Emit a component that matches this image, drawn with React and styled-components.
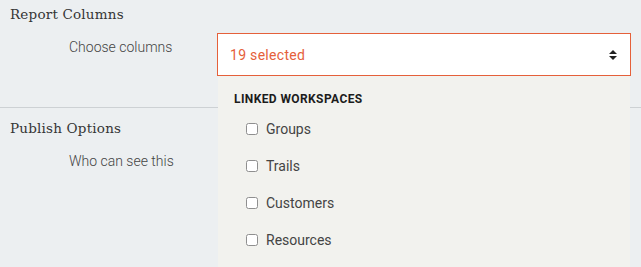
import React from "react";
import styled, { createGlobalStyle } from "styled-components";

const Global = createGlobalStyle`
  html, body { margin: 0; padding: 0; }
  body {
    background: #eceff1;
    font-family: Roboto, "Liberation Sans", sans-serif;
    overflow: hidden;
    height: 267px;
  }
`;

const Page = styled.div`
  width: 641px;
`;

const Section = styled.section`
  padding-top: ${(p) => p.$top}px;
  padding-bottom: ${(p) => p.$bottom}px;
  border-bottom: ${(p) => (p.$divider ? "1px solid #cdd1d4" : "none")};
`;

const Heading = styled.h2`
  margin: 0;
  padding-left: 10px;
  font-family: "DejaVu Serif", serif;
  font-weight: 400;
  font-size: 13.5px;
  line-height: 20px;
  color: #353535;
  letter-spacing: 0.2px;
`;

const FieldRow = styled.div`
  display: grid;
  grid-template-columns: 217px 414px;
  margin-top: 9px;
`;

const Label = styled.div`
  padding-left: 69px;
  font-size: 14px;
  font-weight: 300;
  line-height: 28px;
  color: #444;
`;

const SelectWrap = styled.div`
  position: relative;
`;

const Select = styled.div`
  box-sizing: border-box;
  height: 43px;
  border: 1px solid #e5603a;
  background: #fff;
  display: flex;
  align-items: center;
  justify-content: space-between;
  padding: 0 12px 0 12px;
  font-size: 14px;
  color: #e5603a;
  letter-spacing: 0.3px;
`;

const Dropdown = styled.div`
  position: absolute;
  top: 43px;
  left: 1px;
  right: 1px;
  height: 220px;
  background: #f2f2ee;
  padding-top: 16px;
  z-index: 5;
`;

const GroupTitle = styled.div`
  padding-left: 16px;
  font-size: 12px;
  font-weight: 700;
  line-height: 14px;
  color: #1c1c1c;
  letter-spacing: 0.4px;
  margin-bottom: 4px;
`;

const Option = styled.label`
  display: flex;
  align-items: center;
  height: 37px;
  padding-left: 28px;
  font-size: 14px;
  color: #444;
`;

const Box = styled.span`
  box-sizing: border-box;
  width: 12px;
  height: 12px;
  border: 1px solid #8f8f8f;
  border-radius: 2.5px;
  background: #fff;
  margin-right: 8px;
`;

const Arrows = () => (
  <svg width="10" height="12" viewBox="0 0 10 12">
    <path d="M5 1 L9 5 H1 Z" fill="#222" />
    <path d="M5 11 L9 7 H1 Z" fill="#222" />
  </svg>
);

const options = ["Groups", "Trails", "Customers", "Resources"];

export default function App() {
  return (
    <Page>
      <Global />
      <Section $top={4} $bottom={31} $divider>
        <Heading>Report Columns</Heading>
        <FieldRow>
          <Label>Choose columns</Label>
          <SelectWrap>
            <Select>
              <span>19 selected</span>
              <Arrows />
            </Select>
            <Dropdown>
              <GroupTitle>LINKED WORKSPACES</GroupTitle>
              {options.map((o) => (
                <Option key={o}>
                  <Box />
                  {o}
                </Option>
              ))}
            </Dropdown>
          </SelectWrap>
        </FieldRow>
      </Section>
      <Section $top={10} $bottom={0}>
        <Heading>Publish Options</Heading>
        <FieldRow>
          <Label>Who can see this</Label>
        </FieldRow>
      </Section>
    </Page>
  );
}
